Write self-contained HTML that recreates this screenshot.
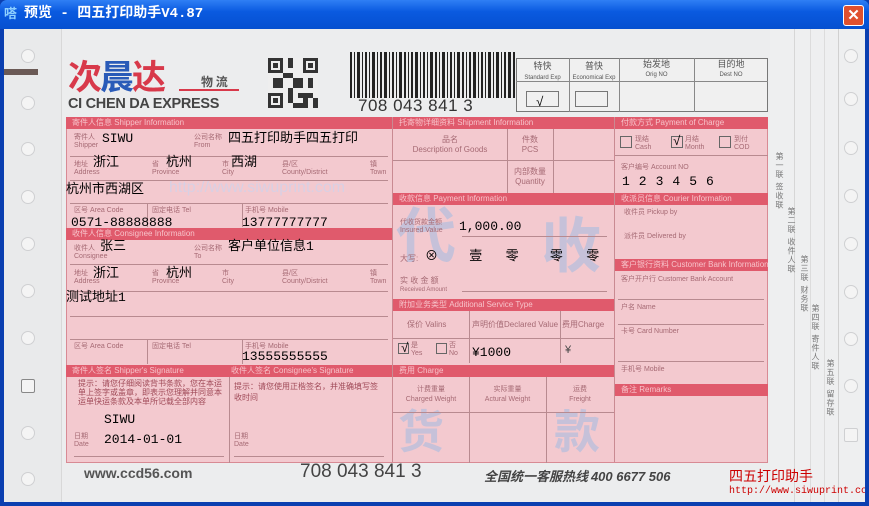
<!DOCTYPE html>
<html><head><meta charset="utf-8"><style>
*{margin:0;padding:0;box-sizing:border-box}
body{width:869px;height:506px;overflow:hidden;background:#0b3fb0;font-family:"Liberation Sans","Noto Sans CJK SC",sans-serif;position:relative}
.a{position:absolute}
#title{left:0;top:0;width:869px;height:29px;background:linear-gradient(#2f7ff5,#0a5ae0 40%,#0650d0);border-radius:7px 7px 0 0}
#client{left:4px;top:29px;width:861px;height:473px;background:#ecedee;overflow:hidden}
.p{position:absolute;background:#f3c9cf}
.h{position:absolute;background:#e05a6c;height:12px;color:#f7c3ca;font-size:8px;line-height:12px;padding-left:6px;white-space:nowrap}
.l{position:absolute;background:#b88a90}
.t{position:absolute;font-family:"Liberation Mono","Noto Sans CJK SC",monospace;font-size:13px;color:#000;white-space:nowrap;line-height:14px}
.s{position:absolute;font-size:7px;color:#a66a74;white-space:nowrap;line-height:8px}
.hole{position:absolute;width:14px;height:14px;border-radius:50%;border:1px solid #cfd0d2;background:#f4f4f4}
.bx{position:absolute;border:1px solid #666;background:#fff}
.v{position:absolute;writing-mode:vertical-rl;font-size:8px;color:#777;letter-spacing:1px}
.wm{position:absolute;color:#a9bde0;opacity:.6;font-weight:bold;font-family:'Noto Sans CJK SC',sans-serif;white-space:nowrap}
</style></head><body>
<div id="title" class="a"></div>
<div class="a" style="left:4px;top:6px;width:16px;height:16px;color:#8fd0ff;font-size:13px;font-weight:bold;line-height:16px">嗒</div>
<div class="a" style="left:24px;top:6px;color:#fff;font-family:'Liberation Mono','Noto Sans CJK SC',monospace;font-weight:bold;font-size:14px;line-height:17px">预览 - 四五打印助手V4.87</div>
<div class="a" style="left:843px;top:5px;width:21px;height:21px;background:#e0502e;border:1px solid #fff;border-radius:3px;color:#fff;font-size:15px;font-weight:bold;text-align:center;line-height:19px">✕</div>

<div id="client" class="a">
<div class="a" style="left:0;top:0;width:58px;height:473px;background:#e9eaeb;border-right:1px solid #d8d8d8"></div>
<div class="a" style="left:0;top:40px;width:34px;height:6px;background:#6b5a56"></div>
<div class="hole" style="left:17px;top:20px"></div><div class="hole" style="left:17px;top:67px"></div>
<div class="hole" style="left:17px;top:113px"></div><div class="hole" style="left:17px;top:161px"></div>
<div class="hole" style="left:17px;top:208px"></div><div class="hole" style="left:17px;top:255px"></div>
<div class="hole" style="left:17px;top:302px"></div><div class="hole" style="left:17px;top:350px;border-radius:2px;border-color:#888"></div>
<div class="hole" style="left:17px;top:397px"></div><div class="hole" style="left:17px;top:443px"></div>
<div class="a" style="left:766px;top:0;width:95px;height:473px;background:#eeeff0"></div>
<div class="a" style="left:790px;top:0;width:1px;height:473px;background:#d6d6d6"></div>
<div class="a" style="left:806px;top:0;width:1px;height:473px;background:#dcdcdc"></div>
<div class="a" style="left:820px;top:0;width:1px;height:473px;background:#dcdcdc"></div>
<div class="a" style="left:834px;top:0;width:1px;height:473px;background:#d0d0d0"></div>
<div class="hole" style="left:840px;top:20px"></div><div class="hole" style="left:840px;top:63px"></div>
<div class="hole" style="left:840px;top:112px"></div><div class="hole" style="left:840px;top:160px"></div>
<div class="hole" style="left:840px;top:208px"></div><div class="hole" style="left:840px;top:256px"></div>
<div class="hole" style="left:840px;top:303px"></div><div class="hole" style="left:840px;top:350px"></div>
<div class="hole" style="left:840px;top:399px;border-radius:2px"></div>
<div class="v" style="left:770px;top:123px">第一联 签收联</div>
<div class="v" style="left:782px;top:178px">第二联 收件人联</div>
<div class="v" style="left:795px;top:226px">第三联 财务联</div>
<div class="v" style="left:806px;top:275px">第四联 寄件人联</div>
<div class="v" style="left:821px;top:330px">第五联 留存联</div>

<div class="a" style="left:64px;top:26px;font-size:34px;font-weight:bold;color:#d8394a;line-height:40px;letter-spacing:-2px;font-family:'Noto Sans CJK SC',sans-serif">次<span style="color:#2a5bb8">晨</span>达</div>
<div class="a" style="left:175px;top:60px;width:60px;height:2px;background:#d8394a"></div>
<div class="a" style="left:197px;top:44px;font-size:12px;font-weight:bold;color:#555;font-family:'Noto Sans CJK SC',sans-serif">物 流</div>
<div class="a" style="left:64px;top:67px;font-size:14.5px;font-weight:bold;color:#444;letter-spacing:-0.3px">CI CHEN DA EXPRESS</div>
<svg class="a" style="left:264px;top:28px" width="50" height="52" viewBox="0 0 10 10">
<rect width="10" height="10" fill="#eee"/>
<g fill="#333"><rect x="0" y="0" width="3" height="3"/><rect x="7" y="0" width="3" height="3"/><rect x="0" y="7" width="3" height="3"/>
<rect x="4" y="0" width="1" height="2"/><rect x="3" y="3" width="2" height="1"/><rect x="5" y="4" width="2" height="2"/><rect x="8" y="4" width="1" height="2"/>
<rect x="4" y="6" width="1" height="3"/><rect x="6" y="7" width="3" height="1"/><rect x="7" y="8" width="1" height="2"/><rect x="1" y="4" width="2" height="2"/><rect x="9" y="8" width="1" height="2"/><rect x="5" y="9" width="2" height="1"/></g>
<g fill="#eee"><rect x=".6" y=".6" width="1.8" height="1.8"/><rect x="7.6" y=".6" width="1.8" height="1.8"/><rect x=".6" y="7.6" width="1.8" height="1.8"/></g>
<g fill="#333"><rect x="1" y="1" width="1" height="1"/><rect x="8" y="1" width="1" height="1"/><rect x="1" y="8" width="1" height="1"/></g>
</svg>
<svg class="a" style="left:346px;top:23px" width="166" height="46">
<g fill="#222">
<rect x="0" width="2" height="46"/><rect x="4" width="1" height="46"/><rect x="7" width="3" height="46"/><rect x="12" width="1" height="46"/><rect x="15" width="2" height="46"/><rect x="19" width="1" height="46"/><rect x="22" width="3" height="46"/><rect x="27" width="1" height="46"/><rect x="30" width="2" height="46"/><rect x="34" width="3" height="46"/><rect x="39" width="1" height="46"/><rect x="42" width="2" height="46"/><rect x="46" width="1" height="46"/><rect x="49" width="3" height="46"/><rect x="54" width="2" height="46"/><rect x="58" width="1" height="46"/><rect x="61" width="2" height="46"/><rect x="65" width="3" height="46"/><rect x="70" width="1" height="46"/><rect x="73" width="2" height="46"/><rect x="77" width="1" height="46"/><rect x="80" width="3" height="46"/><rect x="85" width="2" height="46"/><rect x="89" width="1" height="46"/><rect x="92" width="3" height="46"/><rect x="97" width="1" height="46"/><rect x="100" width="2" height="46"/><rect x="104" width="1" height="46"/><rect x="107" width="3" height="46"/><rect x="112" width="2" height="46"/><rect x="116" width="1" height="46"/><rect x="119" width="2" height="46"/><rect x="123" width="3" height="46"/><rect x="128" width="1" height="46"/><rect x="131" width="2" height="46"/><rect x="135" width="1" height="46"/><rect x="138" width="3" height="46"/><rect x="143" width="1" height="46"/><rect x="146" width="3" height="46"/><rect x="151" width="1" height="46"/><rect x="154" width="2" height="46"/><rect x="158" width="3" height="46"/><rect x="163" width="2" height="46"/>
</g></svg>
<div class="a" style="left:354px;top:67px;font-size:17px;color:#333;letter-spacing:0.5px">708 043 841 3</div>
<div class="a" style="left:512px;top:29px;width:252px;height:54px;border:1px solid #777;background:#f0f0f0"></div>
<div class="l" style="left:512px;top:52px;width:252px;height:1px;background:#888"></div>
<div class="l" style="left:565px;top:29px;width:1px;height:54px;background:#888"></div>
<div class="l" style="left:615px;top:29px;width:1px;height:54px;background:#888"></div>
<div class="l" style="left:690px;top:29px;width:1px;height:54px;background:#888"></div>
<div class="a" style="left:512px;top:32px;width:53px;text-align:center;font-size:9px;color:#555;line-height:10px">特快<br><span style="font-size:6px">Standard Exp</span></div>
<div class="a" style="left:565px;top:32px;width:50px;text-align:center;font-size:9px;color:#555;line-height:10px">普快<br><span style="font-size:6px">Economical Exp</span></div>
<div class="a" style="left:615px;top:31px;width:75px;text-align:center;font-size:9px;color:#555;line-height:9px">始发地<br><span style="font-size:6px">Orig NO</span></div>
<div class="a" style="left:690px;top:31px;width:74px;text-align:center;font-size:9px;color:#555;line-height:9px">目的地<br><span style="font-size:6px">Dest NO</span></div>
<div class="a" style="left:522px;top:62px;width:33px;height:16px;border:1px solid #777"></div>
<div class="a" style="left:571px;top:62px;width:33px;height:16px;border:1px solid #777"></div>
<div class="t" style="left:532px;top:67px">√</div>

<div class="p" style="left:62px;top:88px;width:702px;height:346px"></div>
<div class="wm" style="left:392px;top:168px;font-size:60px;line-height:70px">代</div>
<div class="wm" style="left:537px;top:178px;font-size:60px;line-height:70px">收</div>
<div class="wm" style="left:394px;top:372px;font-size:46px;line-height:56px">货</div>
<div class="wm" style="left:550px;top:372px;font-size:46px;line-height:56px">款</div>
<div class="a" style="left:165px;top:150px;font-size:16px;color:#d8d0e4;white-space:nowrap">http://www.siwuprint.com</div>
<div class="l" style="left:388px;top:88px;width:1px;height:346px;background:#c98a92"></div>
<div class="l" style="left:610px;top:88px;width:1px;height:346px;background:#c98a92"></div>
<div class="a" style="left:62px;top:88px;width:702px;height:346px;border:1px solid #d88a94"></div>

<div class="h" style="left:62px;top:88px;width:326px">寄件人信息 Shipper Information</div>
<div class="s" style="left:70px;top:105px">寄件人<br>Shipper</div>
<div class="s" style="left:190px;top:105px">公司名称<br>From</div>
<div class="l" style="left:66px;top:127px;width:318px;height:1px"></div>
<div class="s" style="left:70px;top:132px">地址<br>Address</div>
<div class="s" style="left:148px;top:132px">省<br>Province</div>
<div class="s" style="left:218px;top:132px">市<br>City</div>
<div class="s" style="left:278px;top:132px">县/区<br>County/District</div>
<div class="s" style="left:366px;top:132px">镇<br>Town</div>
<div class="l" style="left:66px;top:151px;width:318px;height:1px"></div>
<div class="l" style="left:66px;top:174px;width:318px;height:1px"></div>
<div class="s" style="left:70px;top:178px">区号 Area Code</div>
<div class="s" style="left:148px;top:178px">固定电话 Tel</div>
<div class="s" style="left:241px;top:178px">手机号 Mobile</div>
<div class="l" style="left:143px;top:175px;width:1px;height:23px"></div>
<div class="l" style="left:238px;top:175px;width:1px;height:23px"></div>
<div class="h" style="left:62px;top:199px;width:326px">收件人信息 Consignee Information</div>
<div class="s" style="left:70px;top:216px">收件人<br>Consignee</div>
<div class="s" style="left:190px;top:216px">公司名称<br>To</div>
<div class="l" style="left:66px;top:235px;width:318px;height:1px"></div>
<div class="s" style="left:70px;top:241px">地址<br>Address</div>
<div class="s" style="left:148px;top:241px">省<br>Province</div>
<div class="s" style="left:218px;top:241px">市<br>City</div>
<div class="s" style="left:278px;top:241px">县/区<br>County/District</div>
<div class="s" style="left:366px;top:241px">镇<br>Town</div>
<div class="l" style="left:66px;top:262px;width:318px;height:1px"></div>
<div class="l" style="left:66px;top:287px;width:318px;height:1px"></div>
<div class="l" style="left:66px;top:310px;width:318px;height:1px"></div>
<div class="s" style="left:70px;top:314px">区号 Area Code</div>
<div class="s" style="left:148px;top:314px">固定电话 Tel</div>
<div class="s" style="left:241px;top:314px">手机号 Mobile</div>
<div class="l" style="left:143px;top:311px;width:1px;height:24px"></div>
<div class="l" style="left:238px;top:311px;width:1px;height:24px"></div>
<div class="h" style="left:62px;top:336px;width:326px">寄件人签名 Shipper's Signature<span style="position:absolute;left:165px">收件人签名 Consignee's Signature</span></div>
<div class="l" style="left:225px;top:348px;width:1px;height:86px"></div>
<div class="a" style="left:74px;top:350px;width:145px;font-size:8px;color:#a04a58;line-height:9px">提示：请您仔细阅读背书条款，您在本运单上签字或盖章，即表示您理解并同意本运单快运条款及本单所记载全部内容</div>
<div class="a" style="left:230px;top:352px;width:150px;font-size:8px;color:#a04a58;line-height:11px">提示：请您使用正楷签名，并准确填写签收时间</div>
<div class="s" style="left:70px;top:404px">日期<br>Date</div>
<div class="s" style="left:230px;top:404px">日期<br>Date</div>
<div class="l" style="left:70px;top:427px;width:150px;height:1px"></div>
<div class="l" style="left:230px;top:427px;width:150px;height:1px"></div>

<div class="h" style="left:389px;top:88px;width:221px">托寄物详细资料 Shipment Information</div>
<div class="l" style="left:503px;top:100px;width:1px;height:64px"></div>
<div class="l" style="left:549px;top:100px;width:1px;height:64px"></div>
<div class="l" style="left:389px;top:131px;width:221px;height:1px"></div>
<div class="s" style="left:389px;top:106px;width:114px;text-align:center;font-size:8px;line-height:10px">品名<br>Description of Goods</div>
<div class="s" style="left:503px;top:106px;width:46px;text-align:center;font-size:8px;line-height:10px">件数<br>PCS</div>
<div class="s" style="left:503px;top:138px;width:46px;text-align:center;font-size:8px;line-height:10px">内部数量<br>Quantity</div>
<div class="h" style="left:389px;top:164px;width:221px">收款信息 Payment Information</div>
<div class="s" style="left:396px;top:190px">代收货款金额<br>Insured Value</div>
<div class="l" style="left:458px;top:207px;width:145px;height:1px"></div>
<div class="s" style="left:396px;top:226px;font-size:8px">大写:</div>
<div class="s" style="left:396px;top:248px;font-size:8px">实 收 金 额<br><span style="font-size:6px">Received Amount</span></div>
<div class="l" style="left:458px;top:262px;width:145px;height:1px"></div>
<div class="h" style="left:389px;top:270px;width:221px">附加业务类型 Additional Service Type</div>
<div class="l" style="left:389px;top:309px;width:221px;height:1px"></div>
<div class="l" style="left:465px;top:282px;width:1px;height:52px"></div>
<div class="l" style="left:556px;top:282px;width:1px;height:52px"></div>
<div class="s" style="left:403px;top:292px;font-size:8px">保价 Valins</div>
<div class="s" style="left:468px;top:292px;font-size:8px">声明价值Declared Value</div>
<div class="s" style="left:558px;top:292px;font-size:8px">费用Charge</div>
<div class="bx" style="left:394px;top:314px;width:11px;height:11px;background:#f3c9cf"></div>
<div class="s" style="left:407px;top:313px">是<br>Yes</div>
<div class="bx" style="left:432px;top:314px;width:11px;height:11px;background:#f3c9cf"></div>
<div class="s" style="left:445px;top:313px">否<br>No</div>
<div class="s" style="left:561px;top:317px;font-size:11px;color:#444">¥</div>
<div class="h" style="left:389px;top:336px;width:221px">费用 Charge</div>
<div class="l" style="left:465px;top:348px;width:1px;height:86px"></div>
<div class="l" style="left:542px;top:348px;width:1px;height:86px"></div>
<div class="l" style="left:389px;top:383px;width:221px;height:1px"></div>
<div class="s" style="left:389px;top:356px;width:76px;text-align:center;line-height:10px">计费重量<br>Charged Weight</div>
<div class="s" style="left:465px;top:356px;width:77px;text-align:center;line-height:10px">实际重量<br>Actural Weight</div>
<div class="s" style="left:542px;top:356px;width:68px;text-align:center;line-height:10px">运费<br>Freight</div>

<div class="h" style="left:611px;top:88px;width:153px">付款方式 Payment of Charge</div>
<div class="bx" style="left:616px;top:107px;width:12px;height:12px;background:#f3c9cf"></div>
<div class="s" style="left:631px;top:107px">现结<br>Cash</div>
<div class="bx" style="left:667px;top:107px;width:12px;height:12px;background:#f3c9cf"></div>
<div class="s" style="left:681px;top:107px">月结<br>Month</div>
<div class="bx" style="left:715px;top:107px;width:12px;height:12px;background:#f3c9cf"></div>
<div class="s" style="left:730px;top:107px">到付<br>COD</div>
<div class="l" style="left:611px;top:126px;width:153px;height:1px"></div>
<div class="s" style="left:617px;top:135px">客户编号 Account NO</div>
<div class="h" style="left:611px;top:164px;width:153px">收派员信息 Courier Information</div>
<div class="s" style="left:620px;top:180px">收件员 Pickup by</div>
<div class="s" style="left:620px;top:204px">派件员 Delivered by</div>
<div class="h" style="left:611px;top:230px;width:153px">客户银行资料 Customer Bank Information</div>
<div class="s" style="left:617px;top:247px">客户开户行 Customer Bank Account</div>
<div class="l" style="left:614px;top:270px;width:146px;height:1px"></div>
<div class="s" style="left:617px;top:275px">户名 Name</div>
<div class="l" style="left:614px;top:295px;width:146px;height:1px"></div>
<div class="s" style="left:617px;top:299px">卡号 Card Number</div>
<div class="l" style="left:614px;top:332px;width:146px;height:1px"></div>
<div class="s" style="left:617px;top:337px">手机号 Mobile</div>
<div class="h" style="left:611px;top:355px;width:153px">备注 Remarks</div>

<div class="a" style="left:80px;top:436px;font-size:14px;font-weight:bold;color:#555">www.ccd56.com</div>
<div class="a" style="left:296px;top:432px;font-size:19px;color:#444">708 043 841 3</div>
<div class="a" style="left:480px;top:437px;font-size:13px;font-weight:bold;font-style:italic;color:#444;font-family:'Noto Sans CJK SC',sans-serif;white-space:nowrap">全国统一客服热线 <span style="font-family:'Liberation Sans'">400 6677 506</span></div>

<div class="t" style="left:98px;top:103px">SIWU</div>
<div class="t" style="left:224px;top:103px">四五打印助手四五打印</div>
<div class="t" style="left:89px;top:127px">浙江</div>
<div class="t" style="left:162px;top:127px">杭州</div>
<div class="t" style="left:227px;top:127px">西湖</div>
<div class="t" style="left:62px;top:154px">杭州市西湖区</div>
<div class="t" style="left:67px;top:187px">0571-88888888</div>
<div class="t" style="left:238px;top:187px">13777777777</div>
<div class="t" style="left:96px;top:211px">张三</div>
<div class="t" style="left:224px;top:211px">客户单位信息1</div>
<div class="t" style="left:89px;top:238px">浙江</div>
<div class="t" style="left:162px;top:238px">杭州</div>
<div class="t" style="left:62px;top:262px">测试地址1</div>
<div class="t" style="left:238px;top:321px">13555555555</div>
<div class="t" style="left:100px;top:384px">SIWU</div>
<div class="t" style="left:100px;top:404px">2014-01-01</div>
<div class="t" style="left:455px;top:191px">1,000.00</div>
<div class="t" style="left:421px;top:221px">⊗ &nbsp;&nbsp;&nbsp;壹 &nbsp;&nbsp;零 &nbsp;&nbsp;&nbsp;零 &nbsp;&nbsp;零</div>
<div class="t" style="left:468px;top:317px">¥1000</div>
<div class="t" style="left:397px;top:313px">√</div>
<div class="t" style="left:669px;top:106px">√</div>
<div class="t" style="left:618px;top:146px;letter-spacing:9px">123456</div>
<div class="a" style="left:725px;top:439px;font-size:14px;color:#c00;font-family:'Noto Sans CJK SC',sans-serif;line-height:16px;white-space:nowrap">四五打印助手</div>
<div class="a" style="left:725px;top:457px;font-size:10px;color:#c00;font-family:'Liberation Mono',monospace;white-space:nowrap">http://www.siwuprint.co</div>
</div>
</body></html>
